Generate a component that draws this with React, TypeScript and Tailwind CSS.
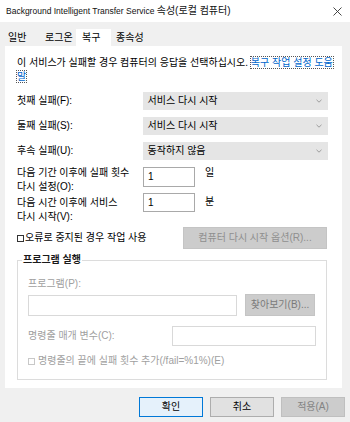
import React from "react";

const Chevron = () => (
  <svg width="6" height="4" viewBox="0 0 6 4" fill="none">
    <path d="M0.5 0.8L3 3.2L5.5 0.8" stroke="#8a8a8a" strokeWidth="0.8" />
  </svg>
);

function Combo({ value }: { value: string }) {
  return (
    <div className="w-[186px] h-[18px] bg-[#e5e5e5] flex items-center justify-between pl-[5px] pr-[6px]">
      <span>{value}</span>
      <Chevron />
    </div>
  );
}

function Button({ label, kind }: { label: string; kind: "default" | "normal" | "disabled" }) {
  const style =
    kind === "default"
      ? "bg-[#e5f1fb] border-[#0078d7] text-black"
      : kind === "normal"
      ? "bg-[#e1e1e1] border-[#adadad] text-black"
      : "bg-[#cccccc] border-[#bfbfbf] text-[#838383]";
  return (
    <div className={`w-[64px] h-[20px] border flex items-center justify-center ${style}`}>
      {label}
    </div>
  );
}

export default function App() {
  return (
    <div className="w-[350px] h-[422px] bg-[#f0f0f0] flex flex-col overflow-hidden text-[10px] leading-[14px] text-black font-['Segoe_UI','Liberation_Sans','Noto_Sans_CJK_KR',sans-serif]">
      {/* Title bar */}
      <div className="h-[22px] shrink-0 bg-white flex items-center justify-between pl-[6px] pr-[8px]">
        <span className="text-[#111] text-[8.5px]">
          Background Intelligent Transfer Service <span className="text-[10px]">속성(로컬 컴퓨터)</span>
        </span>
        <svg width="9" height="9" viewBox="0 0 9 9" fill="none">
          <path d="M0.5 0.5L8.5 8.5M8.5 0.5L0.5 8.5" stroke="#333" strokeWidth="0.9" />
        </svg>
      </div>

      {/* Tabs */}
      <div className="h-[24px] shrink-0 flex items-end pl-[8px]">
        <span className="w-[37px] pb-[1px]">일반</span>
        <span className="w-[31px] pb-[1px]">로그온</span>
        <span className="w-[35px] h-[17px] bg-white pl-[6px] pt-[2px]">복구</span>
        <span className="ml-[5px] pb-[1px]">종속성</span>
      </div>

      {/* Page */}
      <div className="ml-[5px] w-[337px] h-[342px] shrink-0 bg-white pl-[12px] pr-[14px] pt-[10px] flex flex-col">
        <p className="whitespace-nowrap">
          이 서비스가 실패할 경우 컴퓨터의 응답을 선택하십시오.{" "}
          <span className="text-[#0066cc] outline outline-1 outline-dotted outline-[#555]">복구 작업 설정 도움</span>
          <br />
          <span className="text-[#0066cc] outline outline-1 outline-dotted outline-[#555]">말</span>
        </p>

        <div className="mt-[8px] flex flex-col gap-[7px]">
          <div className="flex items-center h-[18px]">
            <span className="w-[126px]">첫째 실패(F):</span>
            <Combo value="서비스 다시 시작" />
          </div>
          <div className="flex items-center h-[18px]">
            <span className="w-[126px]">둘째 실패(S):</span>
            <Combo value="서비스 다시 시작" />
          </div>
          <div className="flex items-center h-[18px]">
            <span className="w-[126px]">후속 실패(U):</span>
            <Combo value="동작하지 않음" />
          </div>
        </div>

        {/* Reset counters */}
        <div className="mt-[6px] h-[27px] flex items-start">
          <span className="w-[126px]">
            다음 기간 이후에 실패 횟수
            <br />
            다시 설정(O):
          </span>
          <div className="mt-[1px] w-[52px] h-[20px] border border-[#a9a9a9] pl-[4px] flex items-center">1</div>
          <span className="ml-[10px]">일</span>
        </div>
        <div className="h-[31px] flex items-start">
          <span className="w-[126px] pt-[3px]">
            다음 시간 이후에 서비스
            <br />
            다시 시작(V):
          </span>
          <div className="w-[52px] h-[19px] border border-[#a9a9a9] pl-[4px] flex items-center">1</div>
          <span className="ml-[10px] pt-[2px]">분</span>
        </div>

        {/* Stop with errors */}
        <div className="mt-[3px] h-[22px] flex items-center justify-between">
          <label className="flex items-center">
            <span className="w-[7px] h-[7px] border border-[#333]" />
            <span className="ml-[1px]">오류로 중지된 경우 작업 사용</span>
          </label>
          <div className="mr-[1px] w-[144px] h-[22px] bg-[#cccccc] border border-[#c4c4c4] flex items-center justify-center text-[#8f8f8f]">
            컴퓨터 다시 시작 옵션(R)...
          </div>
        </div>

        {/* Run program */}
        <fieldset className="mt-[4px] w-[310px] border border-[#dcdcdc] pl-[4px] pb-[11px]">
          <legend className="px-[1px] font-bold text-[#1a1a1a]">프로그램 실행</legend>
          <div className="pl-[6px] pr-[10px] flex flex-col text-[#a0a0a0]">
            <span className="mt-[10px]">프로그램(P):</span>
            <div className="mt-[3px] flex items-center">
              <div className="w-[209px] h-[21px] border border-[#d9d9d9] bg-white" />
              <div className="ml-[8px] w-[70px] h-[22px] bg-[#cccccc] border border-[#c4c4c4] flex items-center justify-center text-[#7a7a7a]">
                찾아보기(B)...
              </div>
            </div>
            <div className="mt-[10px] h-[20px] flex items-center justify-between">
              <span>명령줄 매개 변수(C):</span>
              <div className="w-[144px] h-[20px] border border-[#d9d9d9] bg-white" />
            </div>
            <div className="mt-[8px] flex items-center">
              <span className="w-[7px] h-[7px] border border-[#c8c8c8]" />
              <span className="ml-[3px]">명령줄의 끝에 실패 횟수 추가(/fail=%1%)(E)</span>
            </div>
          </div>
        </fieldset>
      </div>

      {/* Dialog buttons */}
      <div className="mt-[9px] flex justify-end gap-[7px] pr-[5px]">
        <Button label="확인" kind="default" />
        <Button label="취소" kind="normal" />
        <Button label="적용(A)" kind="disabled" />
      </div>
    </div>
  );
}
